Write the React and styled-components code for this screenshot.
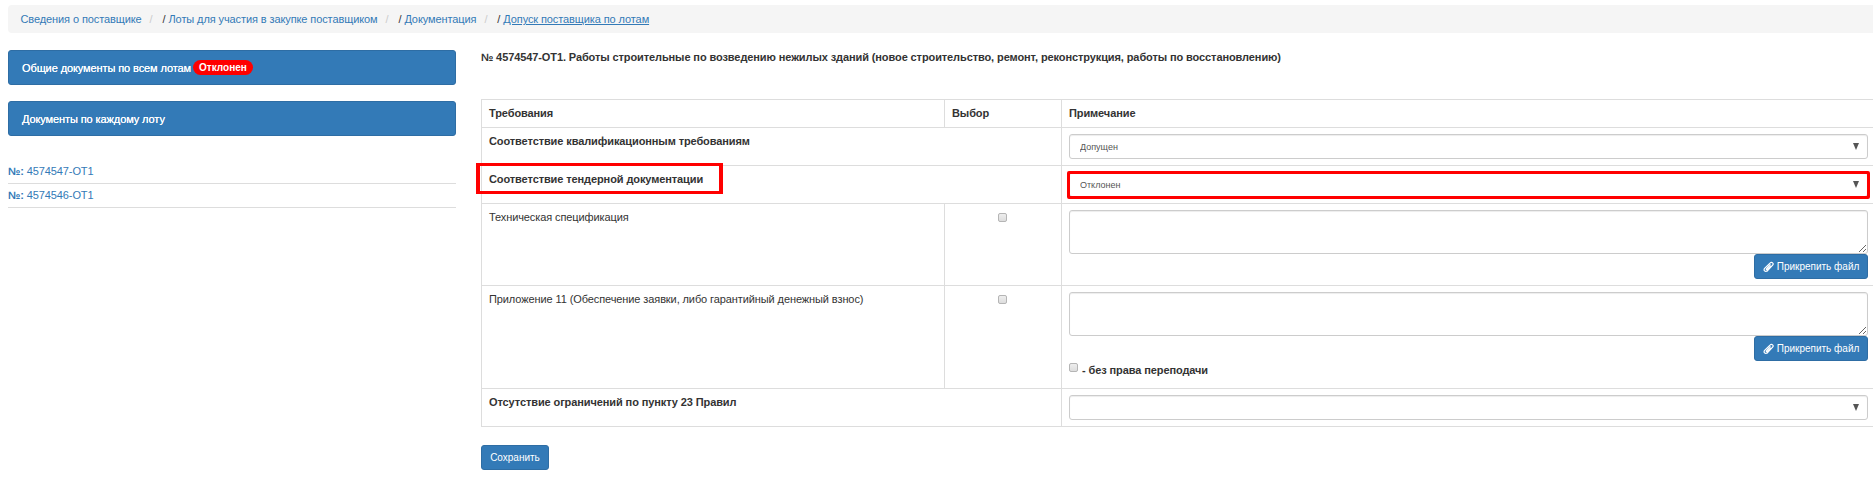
import React from "react"
import styled, { createGlobalStyle } from "styled-components"

const Global = createGlobalStyle`
html, body {
  margin: 0;
  padding: 0;
  background: #fff;
  overflow: hidden;
}
body {
  font-family: "Liberation Sans", Arial, sans-serif;
  font-size: 11px;
  letter-spacing: -0.1px;
  color: #333;
}
*, *::before, *::after {
  box-sizing: border-box;
}
`;

const Page = styled.div`
width: 1885px;
padding: 5px 8px 0;
`;

const Breadcrumb = styled.ol`
display: flex;
align-items: center;
height: 28px;
margin: 0 0 17px;
padding: 0 12.5px;
list-style: none;
background: #f5f5f5;
border-radius: 4px;
`;

const Crumb = styled.li`
white-space: pre;
color: #333;
a {
  color: #337ab7;
  text-decoration: ${(p) => (p.$current ? "underline" : "none")};
}
&:not(:last-child)::after {
  content: "/";
  color: #ccc;
  padding: 0 10px 0 8px;
}
`;

const Columns = styled.div`
display: flex;
align-items: flex-start;
`;

const Sidebar = styled.aside`
width: 448px;
flex: none;
margin-right: 25px;
`;

const PanelLink = styled.div`
display: flex;
align-items: center;
gap: 2px;
height: 35px;
margin-bottom: 16px;
padding: 0 13px;
color: #fff;
text-shadow: 0 0 0.6px #fff;
background: #337ab7;
border: 1px solid #2e6da4;
border-radius: 3px;
`;

const Badge = styled.span`
padding: 2.5px 6px;
color: #fff;
font-size: 10px;
font-weight: 700;
line-height: 10px;
letter-spacing: 0;
text-shadow: none;
background: #f00;
border-radius: 10px;
`;

const LotList = styled.ul`
margin: 0;
padding: 8px 0 0;
list-style: none;
`;

const Lot = styled.li`
height: 24px;
padding-top: 5px;
color: #337ab7;
border-bottom: 1px solid #ddd;
b {
  font-weight: 700;
}
`;

const Content = styled.main`
flex: 1;
min-width: 0;
`;

const Title = styled.h4`
height: 49px;
margin: 0;
padding-top: 1px;
font-size: 11px;
line-height: 13px;
font-weight: 700;
`;

const Table = styled.table`
width: 100%;
border-collapse: collapse;
table-layout: fixed;
th, td {
  padding: 6px 8px 6px 7px;
  text-align: left;
  vertical-align: top;
  border: 1px solid #ddd;
  line-height: 15px;
}
th {
  font-weight: 700;
}
`;

const Row = styled.tr`
height: ${(p) => p.$h}px;
`;

const ReqCol = styled.col`
width: 463px;
`;

const PickCol = styled.col`
width: 117px;
`;

const Strong = styled.td`
font-weight: 700;
`;

const Marked = styled.span`
position: relative;
&::after {
  content: "";
  position: absolute;
  left: -13px;
  top: -10px;
  width: 247px;
  height: 31px;
  border-style: solid;
  border-color: #f00;
  border-width: 3px 4px;
  pointer-events: none;
}
`;

const SelectWrap = styled.div`
position: relative;
height: 25px;
&::after {
  content: "";
  position: absolute;
  right: 9px;
  top: 9px;
  border-style: solid;
  border-color: #555 transparent transparent;
  border-width: 7px 3.5px 0;
  pointer-events: none;
}
${(p) => p.$marked && `
&::before {
  content: "";
  position: absolute;
  inset: -1px -2px -2px;
  border: 3px solid #f00;
  border-radius: 2px;
  pointer-events: none;
}
`}
`;

const Select = styled.select`
display: block;
width: 100%;
height: 25px;
padding: 0 10px;
font: 9px "Liberation Sans", Arial, sans-serif;
color: #555;
appearance: none;
background: #fff;
border: 1px solid #ccc;
border-radius: 3px;
box-shadow: inset 0 1px 1px rgba(0, 0, 0, 0.075);
`;

const Note = styled.textarea`
display: block;
width: 100%;
height: 44px;
padding: 5px 11px;
font: 9px "Liberation Sans", Arial, sans-serif;
background: #fff;
border: 1px solid #ccc;
border-radius: 3px;
box-shadow: inset 0 1px 1px rgba(0, 0, 0, 0.075);
`;

const AttachRow = styled.div`
display: flex;
justify-content: flex-end;
`;

const Button = styled.button`
display: inline-flex;
align-items: center;
justify-content: center;
gap: 3px;
width: ${(p) => p.$w}px;
height: 25px;
padding: 0;
font: 10px "Liberation Sans", Arial, sans-serif;
color: #fff;
background: #337ab7;
border: 1px solid #2e6da4;
border-radius: 3px;
`;

const SaveButton = styled(Button)`
margin-top: 18px;
`;

const Check = styled.input.attrs({ type: "checkbox" })`
display: block;
flex: none;
width: 9px;
height: 9px;
margin: ${(p) => (p.$inline ? "-5px 0 0" : "3px auto 0")};
appearance: none;
background: linear-gradient(#eee, #ddd);
border: 1px solid #b5b5b5;
border-radius: 2px;
`;

const NoResend = styled.label`
display: flex;
align-items: center;
gap: 4px;
height: 16px;
margin-top: 1px;
font-weight: 700;
`;

const Clip = () => (
    <svg width="11" height="12" viewBox="0 0 24 24" fill="none" stroke="#fff" strokeWidth="2.6" strokeLinecap="round" strokeLinejoin="round">
        <path d="M9 21 L21 8 a3.6 3.6 0 0 0 -5.2 -5 L3.5 15 a3.8 3.8 0 0 0 5.5 5.5" />
        <path d="M15.5 7 L7.5 15.5 a1.4 1.4 0 0 0 2 2 L16.5 10" />
    </svg>
);

const App = () => {
    return (
        <Page>
            <Global />
            <Breadcrumb>
                <Crumb><a href="#a">Сведения о поставщике</a></Crumb>
                <Crumb>/ <a href="#b">Лоты для участия в закупке поставщиком</a></Crumb>
                <Crumb>/ <a href="#c">Документация</a></Crumb>
                <Crumb $current>/ <a href="#d">Допуск поставщика по лотам</a></Crumb>
            </Breadcrumb>
            <Columns>
                <Sidebar>
                    <PanelLink>Общие документы по всем лотам <Badge>Отклонен</Badge></PanelLink>
                    <PanelLink>Документы по каждому лоту</PanelLink>
                    <LotList>
                        <Lot><b>№:</b> 4574547-ОТ1</Lot>
                        <Lot><b>№:</b> 4574546-ОТ1</Lot>
                    </LotList>
                </Sidebar>
                <Content>
                    <Title>№ 4574547-ОТ1. Работы строительные по возведению нежилых зданий (новое строительство, ремонт, реконструкция, работы по восстановлению)</Title>
                    <Table>
                        <colgroup>
                            <ReqCol />
                            <PickCol />
                            <col />
                        </colgroup>
                        <thead>
                            <Row $h={28}>
                                <th>Требования</th>
                                <th>Выбор</th>
                                <th>Примечание</th>
                            </Row>
                        </thead>
                        <tbody>
                            <Row $h={38}>
                                <Strong colSpan={2}>Соответствие квалификационным требованиям</Strong>
                                <td>
                                    <SelectWrap>
                                        <Select defaultValue="ok"><option value="ok">Допущен</option></Select>
                                    </SelectWrap>
                                </td>
                            </Row>
                            <Row $h={38}>
                                <Strong colSpan={2}><Marked>Соответствие тендерной документации</Marked></Strong>
                                <td>
                                    <SelectWrap $marked>
                                        <Select defaultValue="no"><option value="no">Отклонен</option></Select>
                                    </SelectWrap>
                                </td>
                            </Row>
                            <Row $h={82}>
                                <td>Техническая спецификация</td>
                                <td><Check /></td>
                                <td>
                                    <Note />
                                    <AttachRow><Button $w={114}><Clip />Прикрепить файл</Button></AttachRow>
                                </td>
                            </Row>
                            <Row $h={103}>
                                <td>Приложение 11 (Обеспечение заявки, либо гарантийный денежный взнос)</td>
                                <td><Check /></td>
                                <td>
                                    <Note />
                                    <AttachRow><Button $w={114}><Clip />Прикрепить файл</Button></AttachRow>
                                    <NoResend><Check $inline /> - без права переподачи</NoResend>
                                </td>
                            </Row>
                            <Row $h={38}>
                                <Strong colSpan={2}>Отсутствие ограничений по пункту 23 Правил</Strong>
                                <td>
                                    <SelectWrap>
                                        <Select defaultValue=""><option value=""></option></Select>
                                    </SelectWrap>
                                </td>
                            </Row>
                        </tbody>
                    </Table>
                    <SaveButton $w={68}>Сохранить</SaveButton>
                </Content>
            </Columns>
        </Page>
    );
};

export default App;
